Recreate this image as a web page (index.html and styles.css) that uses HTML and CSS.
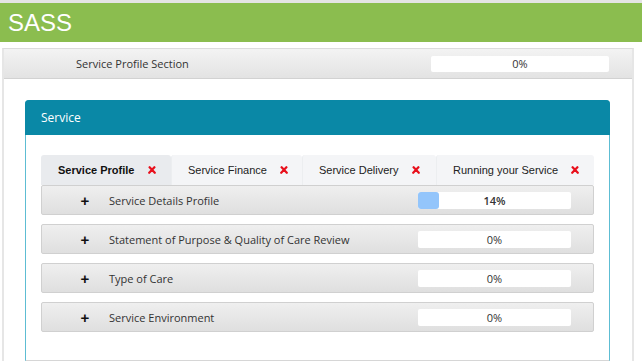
FILE: index.html
```html
<!DOCTYPE html>
<html lang="en">
<head>
    <meta charset="UTF-8">
    <title>SASS</title>
    <link rel="stylesheet" href="styles.css">
</head>
<body>
    <div class="topbar">SASS</div>

    <div class="section">
        <div class="section-head">
            <span class="section-title">Service Profile Section</span>
            <div class="progress"><span class="progress-label">0%</span></div>
        </div>

        <div class="section-body">
            <div class="card">
                <div class="card-head">Service</div>
                <div class="card-body">
                    <div class="tabs">
                        <div class="tab active">Service Profile <svg class="cross" viewBox="0 0 10 10"><path d="M2 1.5 L8.5 8.5 M8 1.5 L1.5 8.5"/></svg></div>
                        <div class="tab">Service Finance <svg class="cross" viewBox="0 0 10 10"><path d="M2 1.5 L8.5 8.5 M8 1.5 L1.5 8.5"/></svg></div>
                        <div class="tab">Service Delivery <svg class="cross" viewBox="0 0 10 10"><path d="M2 1.5 L8.5 8.5 M8 1.5 L1.5 8.5"/></svg></div>
                        <div class="tab">Running your Service <svg class="cross" viewBox="0 0 10 10"><path d="M2 1.5 L8.5 8.5 M8 1.5 L1.5 8.5"/></svg></div>
                    </div>

                    <div class="rows">
                        <div class="row">
                            <span class="plus">+</span>
                            <span class="row-title">Service Details Profile</span>
                            <div class="progress row-progress">
                                <div class="progress-fill" style="width: 14%"></div>
                                <span class="progress-label bold">14%</span>
                            </div>
                        </div>
                        <div class="row">
                            <span class="plus">+</span>
                            <span class="row-title">Statement of Purpose &amp; Quality of Care Review</span>
                            <div class="progress row-progress"><span class="progress-label">0%</span></div>
                        </div>
                        <div class="row">
                            <span class="plus">+</span>
                            <span class="row-title">Type of Care</span>
                            <div class="progress row-progress"><span class="progress-label">0%</span></div>
                        </div>
                        <div class="row">
                            <span class="plus">+</span>
                            <span class="row-title">Service Environment</span>
                            <div class="progress row-progress"><span class="progress-label">0%</span></div>
                        </div>
                    </div>
                </div>
            </div>
        </div>
    </div>
</body>
</html>
```

FILE: styles.css
```css
body {
    margin: 0;
    padding: 0;
    background-color: #fff;
    font-family: "Open Sans", Arial, sans-serif;
    color: #333;
    overflow: hidden;
}

.topbar {
    height: 39px;
    border-top: 3px solid #e4e4e4;
    background-color: #8bbd4f;
    color: #fff;
    font-family: "Liberation Sans", Arial, sans-serif;
    font-size: 24px;
    line-height: 39px;
    padding-left: 8px;
}

.section {
    margin: 6px 8px 0 2px;
    border-left: 2px solid #e6e6e6;
    border-right: 2px solid #e6e6e6;
    border-top: 1px solid #dcdcdc;
}

.section-head {
    height: 29px;
    display: flex;
    align-items: center;
    justify-content: space-between;
    padding: 0 23px 0 72px;
    background: linear-gradient(#f3f3f3, #e3e3e3);
    border-bottom: 1px solid #d2d2d2;
}

.section-title {
    font-size: 11px;
    color: #333;
}

.progress {
    position: relative;
    width: 178px;
    height: 16px;
    background-color: #fff;
    border-radius: 2px;
    display: flex;
    align-items: center;
    justify-content: center;
}

.progress-label {
    position: relative;
    font-size: 11px;
    color: #333;
}

.progress-label.bold {
    font-weight: 600;
}

.progress-fill {
    position: absolute;
    left: 0;
    top: 0;
    bottom: 0;
    background-color: #93c5fb;
    border-radius: 3px;
}

.section-body {
    padding: 21px 22px 0 21px;
}

.card {
    border: 1px solid #5dbdd3;
    border-bottom: 1px solid #d6d6d6;
    border-radius: 4px 4px 0 0;
}

.card-head {
    height: 35px;
    margin: -1px -1px 0 -1px;
    padding-left: 16px;
    background-color: #0a88a6;
    border-radius: 4px 4px 0 0;
    color: #fff;
    font-size: 12px;
    line-height: 35px;
}

.card-body {
    padding: 20px 15px 28px 15px;
}

.tabs {
    display: grid;
    grid-template-columns: 130px 131px 134px 158px;
    height: 30px;
}

.tab {
    display: flex;
    align-items: center;
    padding-left: 16px;
    background-color: #f4f5f7;
    border-left: 1px solid #eceef0;
    border-radius: 3px 3px 0 0;
    font-family: "Liberation Sans", Arial, sans-serif;
    font-size: 11px;
    color: #222;
    white-space: pre;
}

.tab.active {
    background-color: #e9ebee;
    border-left: none;
    padding-left: 17px;
    font-weight: bold;
    color: #111;
}

.cross {
    width: 8px;
    height: 8px;
    margin-left: 10px;
    stroke: #e8101c;
    stroke-width: 2.8;
    stroke-linecap: round;
    fill: none;
}

.rows {
    display: flex;
    flex-direction: column;
    gap: 9px;
}

.row {
    height: 28px;
    display: flex;
    align-items: center;
    border: 1px solid #d0d0d0;
    border-radius: 2px;
    background: linear-gradient(#efefef, #dfdfdf);
}

.plus {
    width: 12px;
    margin-left: 37px;
    font-family: "Liberation Sans", Arial, sans-serif;
    font-size: 15px;
    font-weight: bold;
    color: #111;
    text-align: center;
}

.row-title {
    margin-left: 18px;
    flex: 1;
    font-size: 11px;
    color: #333;
}

.row-progress {
    width: 153px;
    height: 17px;
    margin-right: 22px;
}
```
